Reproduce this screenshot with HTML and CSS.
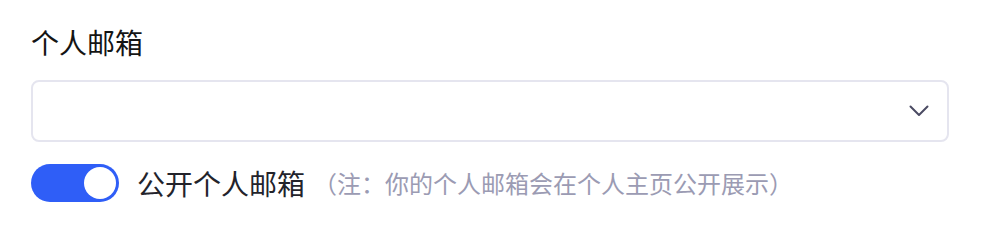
FILE: index.html
```html
<!DOCTYPE html>
<html lang="zh-CN">
<head>
    <meta charset="UTF-8">
    <meta name="viewport" content="width=device-width, initial-scale=1.0">
    <title>个人邮箱</title>
    <link rel="stylesheet" href="styles.css">
</head>
<body>
    <div class="form_item">
        <div class="label">个人邮箱</div>
        <div class="select">
            <span class="select_value"></span>
            <svg class="arrow" width="20" height="12" viewBox="0 0 20 12">
                <polyline points="1.5,1.5 10,10 18.5,1.5" fill="none" stroke="#4b4b63" stroke-width="2" stroke-linecap="round" stroke-linejoin="round"/>
            </svg>
        </div>
        <div class="switch_row">
            <span class="switch on"><i></i></span>
            <span class="switch_text">公开个人邮箱</span>
            <span class="tip">（注：你的个人邮箱会在个人主页公开展示）</span>
        </div>
    </div>
</body>
</html>
```

FILE: styles.css
```css
* { margin: 0; padding: 0; box-sizing: border-box;}
html, body { background: #ffffff; font-family: "Noto Sans CJK SC", "Noto Sans", sans-serif;}
.form_item { padding: 22px 0 0 31px; width: 949px;}
.label { font-size: 28px; line-height: 40px; color: #141414; height: 40px;}
.select { margin-top: 18px; height: 62px; border: 2px solid #e5e5ef; border-radius: 8px; display: flex; align-items: center; justify-content: flex-end; padding-right: 18px;}
.select_value { flex: 1;}
.arrow { display: block;}
.switch_row { display: flex; align-items: center; margin-top: 22px; height: 38px;}
.switch { width: 88px; height: 38px; border-radius: 19px; background: #2f5ef7; position: relative; flex: none;}
.switch i { position: absolute; width: 32px; height: 32px; border-radius: 50%; background: #ffffff; top: 3px; right: 3px;}
.switch_text { font-size: 28px; color: #23232b; margin-left: 18px; line-height: 38px;}
.tip { font-size: 24px; color: #9b9bb3; margin-left: 8px; line-height: 38px;}
```
